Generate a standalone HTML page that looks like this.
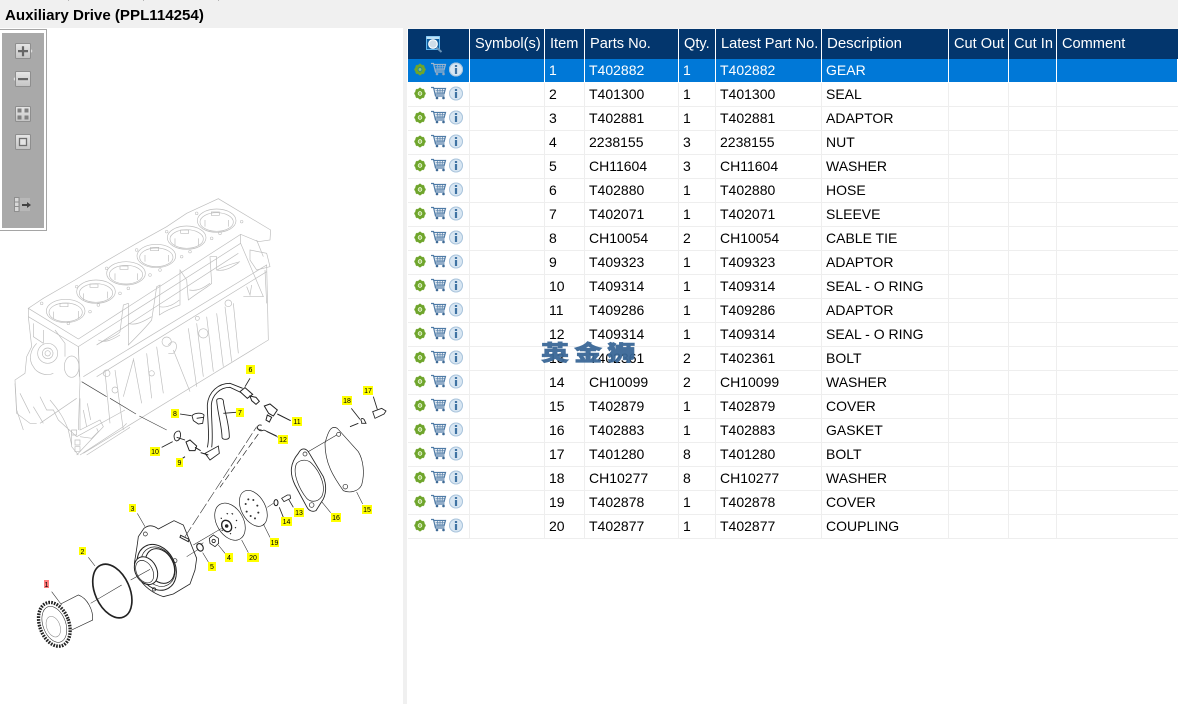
<!DOCTYPE html>
<html lang="en">
<head>
<meta charset="utf-8">
<title>Auxiliary Drive</title>
<style>
html,body{margin:0;padding:0;background:#fff;}
body{width:1178px;height:704px;overflow:hidden;position:relative;font-family:"Liberation Sans","Noto Sans CJK SC",sans-serif;}
.abs{position:absolute;}
#title{left:0;top:0;width:1178px;height:28px;background:#f0f0f0;}
#title span{position:absolute;left:5px;top:7px;font-size:15.1px;font-weight:bold;line-height:17px;color:#000;white-space:nowrap;}
#title i{position:absolute;top:0;width:1px;height:1px;background:#b5b5b5;}
#sep{left:403px;top:28px;width:4px;height:676px;background:#f0f0f0;}
#band{left:407px;top:28px;width:771px;height:1px;background:#f4f4f4;}
#tbi{left:2px;top:33px;width:42px;height:195px;background:#a9a9a9;}
#tbo{left:0;top:29px;width:47px;height:202px;box-sizing:border-box;border:1px solid #a5a5a5;border-left:none;background:#fff;}
table{position:absolute;left:408px;top:29px;width:770px;border-collapse:separate;border-spacing:0;table-layout:fixed;}
th{background:#03366d;color:#fff;font-weight:normal;font-size:14.6px;height:30px;padding:0 0 0 5px;text-align:left;border-right:1px solid #fff;box-sizing:border-box;white-space:nowrap;overflow:hidden;line-height:30px;}
td{height:24px;box-sizing:border-box;padding:1px 0 1px 4px;font-size:14px;line-height:21px;color:#000;border-right:1px solid #eee;border-bottom:1px solid #eee;white-space:nowrap;overflow:hidden;}
tr.s td{background:#0078d7;color:#fff;border-right:1px solid #fff;border-bottom:1px solid #fff;}
tr.s svg{--c:#9db4cc;--d:#8fa6bf;}
td:last-child,th:last-child{border-right:none;}
td.ic{padding:0;position:relative;}
td.ic svg{position:absolute;left:4px;top:2px;}
#wm{left:541px;top:335px;height:34px;font-family:"Noto Sans CJK SC",sans-serif;font-weight:900;font-size:25px;line-height:34px;letter-spacing:4.6px;color:#3a6897;white-space:nowrap;opacity:.95;transform:scale(1.12,.86);transform-origin:left center;-webkit-text-stroke:.7px #3a6897;}
.l{font:7px "Liberation Sans",sans-serif;fill:#000;text-anchor:middle;}
</style>
</head>
<body>
<div id="title" class="abs"><i style="left:68px"></i><i style="left:143px"></i><i style="left:218px"></i><span>Auxiliary Drive (PPL114254)</span></div>
<div id="sep" class="abs"></div>
<div id="band" class="abs"></div>

<svg class="abs" style="left:0;top:0" width="403" height="704" viewBox="0 0 403 704">
 <defs>
 <filter id="bl" x="-5%" y="-5%" width="110%" height="110%"><feGaussianBlur stdDeviation=".3"/></filter>
 </defs>
 <g filter="url(#bl)">
 <!-- engine block, coordinates in 3x zoom space -->
 <g transform="translate(0,190) scale(.33333)" fill="none" stroke="#bdbdbd" stroke-width="2">
  <path d="M85 355 L100 345 L130 325 L225 270 L315 215 L410 160 L500 110 L560 70 L625 40 L655 26 L812 120 L810 150 L775 155 L722 133 L235 447 L85 355Z"/>
  <path d="M85 355 L85 380 L235 470 L722 160 L722 133"/>
  <ellipse cx="197" cy="363" rx="58" ry="35"/><ellipse cx="197" cy="367" rx="50" ry="28"/>
  <ellipse cx="288" cy="305" rx="58" ry="35"/><ellipse cx="288" cy="309" rx="50" ry="28"/>
  <ellipse cx="378" cy="250" rx="58" ry="35"/><ellipse cx="378" cy="254" rx="50" ry="28"/>
  <ellipse cx="469" cy="198" rx="58" ry="35"/><ellipse cx="469" cy="202" rx="50" ry="28"/>
  <ellipse cx="560" cy="143" rx="58" ry="35"/><ellipse cx="560" cy="147" rx="50" ry="28"/>
  <ellipse cx="650" cy="92" rx="58" ry="35"/><ellipse cx="650" cy="96" rx="50" ry="28"/>
  <path d="M180 340h24v10h-24zM270 282h24v10h-24zM360 228h24v10h-24zM452 172h24v10h-24zM542 120h24v10h-24zM634 66h24v10h-24z"/>
  <path d="M160 385v-20M235 385v-22M250 330v-20M322 325v-20M345 270v-20M412 270v-20M435 215v-20M505 215v-20M525 165v-20M595 165v-20M615 110v-20M685 110v-20"/>
  <g stroke-width="1.6"><circle cx="125" cy="340" r="4"/><circle cx="205" cy="400" r="4"/><circle cx="270" cy="365" r="4"/><circle cx="295" cy="345" r="4"/><circle cx="360" cy="310" r="4"/><circle cx="385" cy="295" r="4"/><circle cx="450" cy="255" r="4"/><circle cx="480" cy="240" r="4"/><circle cx="545" cy="200" r="4"/><circle cx="570" cy="185" r="4"/><circle cx="635" cy="145" r="4"/><circle cx="660" cy="130" r="4"/><circle cx="725" cy="95" r="4"/><circle cx="590" cy="70" r="4"/><circle cx="500" cy="125" r="4"/><circle cx="410" cy="180" r="4"/><circle cx="320" cy="235" r="4"/><circle cx="230" cy="290" r="4"/></g>
  <!-- side skirt -->
  <path d="M235 470 L240 575 L235 720 M250 560 L800 225 L805 450 L250 790 M290 465 L715 190 M722 160 L790 320 L730 320 M290 560 L800 245"/>
  <path d="M290 465 C300 455 350 440 360 425 L370 345 L385 340 L385 465 C410 440 440 410 455 390 L470 290 L480 285 L478 375 C500 360 540 345 540 345 L540 240 L560 270 L565 330 C590 310 625 290 635 280 L630 200 L650 200 L650 240 C680 225 720 215 720 215"/>
  <path d="M295 450c20 10 40 0 65-15M385 400c20 8 45-5 70-20M478 350c25 5 45-8 60-20M568 300c25 5 45-8 62-20M650 240c25 5 45-8 66-22"/>
  <path d="M750 180 L800 190 L810 230 L770 240 L750 210Z M770 150 L790 200 M795 240 L800 340 M740 290 L750 315 L755 285"/>
  <path d="M370 620 L400 510 M400 505 L425 640 M440 490 L455 625 M470 470 L490 610 M505 465 C525 440 540 470 520 490 L505 490 M520 480 L570 605 M565 415 L590 590 M590 400 L610 560 M620 380 L640 545 M650 370 L670 530 M675 350 L695 515 M700 340 L715 490 M315 545 L330 700 M345 540 L370 720"/>
  <circle cx="500" cy="455" r="14"/><circle cx="610" cy="430" r="14"/><circle cx="320" cy="550" r="10"/><circle cx="345" cy="600" r="9"/><circle cx="455" cy="550" r="8"/><circle cx="592" cy="385" r="6"/><circle cx="685" cy="340" r="10"/>
  <!-- front face -->
  <path d="M85 380 L95 470 L80 500 L75 550 L45 570 L50 660 L70 720 M235 470 L238 560"/>
  <circle cx="143" cy="490" r="30"/><circle cx="143" cy="490" r="16"/><circle cx="143" cy="490" r="8"/>
  <ellipse cx="215" cy="530" rx="22" ry="32"/>
  <path d="M100 400l0 40 30 20M130 420l0 40M165 420l30 40 0 40M110 460c-20 20-25 50-10 70 10 20 40 30 60 20"/>
 </g>
 <g transform="translate(0,430) scale(.33333)" fill="none" stroke="#bdbdbd" stroke-width="2">
  <path d="M45 -140 L50 -50 L90 -20 L110 -20 M120 -20 L230 -95 M215 0 L215 50 L235 75 M240 -95 L240 0 L300 -30 L310 -10 L230 75 M230 20 L375 -60"/>
  <path d="M120 -100 L140 -60 L160 -60 L175 -30 L230 20 M100 -70 L130 -20 M60 -110 L90 -50 M150 -90 C175 -60 190 -40 205 0 L215 45 M250 -60 L260 -10 M262 -80 L272 -30 M240 20 L275 25 L295 5 L290 -5 M215 0h15v15h-15zM225 30h15v15h-15zM225 50h15v15h-15z"/>
  <path d="M240 75 L370 -10 L380 -20 M260 75 L390 -8"/>
 </g>
 <!-- leader dash -->
 <g transform="translate(0,190) scale(.33333)" fill="none" stroke="#444" stroke-width="2">
  <path d="M245 575 L320 620 M330 625 L408 672 M418 678 L500 720"/>
 </g>
 <!-- parts upper -->
 <g transform="translate(130,360) scale(.33333)" fill="none" stroke="#222" stroke-width="2.6">
  <path d="M232 262 C240 230 232 180 232 135 C235 95 265 70 300 70 L338 85 M245 262 C250 230 244 180 244 135 C246 105 270 82 300 82 L332 97"/>
  <path d="M330 95 L345 83 L368 103 L352 115 Z M360 108 L378 112 L388 124 L378 133 L365 122Z" stroke-width="3"/>
  <path d="M345 80 L360 55 M225 280 L265 258 L268 280 L240 300 Z" />
  <path d="M260 120 C262 115 278 113 280 122 C282 150 298 190 298 232 C295 240 278 240 276 232 C276 200 262 155 260 120Z"/>
  <path d="M280 160 L318 157"/>
  <path d="M186 167 C195 158 215 157 222 165 L218 190 L205 192 L190 182 Z M200 175 L220 172 M150 162 L184 167"/>
  <path d="M403 138 L420 132 L442 150 L430 168 L416 160 Z M412 165 L425 172 L418 186 L408 180Z M442 162 L482 182" stroke-width="3"/>
  <path d="M395 196 C385 192 380 200 384 208 C390 214 398 212 402 210 M402 210 L440 228"/>
  <path d="M135 240 C128 225 135 213 148 213 C155 222 152 240 140 243 Z M140 232 L165 240 M95 262 L128 245" />
  <path d="M168 246 L180 240 L200 258 L195 272 L178 272 Z M195 262 L212 272 M212 278 L235 285 M165 290 L150 300" stroke-width="3"/>
  <path d="M385 222 L270 382" stroke-dasharray="20 10" stroke-width="2"/>
  <path d="M695 185 C690 178 695 172 702 178 L708 190 L695 190Z M728 155 L755 145 L768 153 L762 162 L735 175 Z M664 145 L690 178 M730 110 L742 148 M660 200 L685 190" />
 </g>
 <!-- parts lower -->
 <g transform="translate(0,430) scale(.33333)" fill="none" stroke="#222" stroke-width="2.6">
  <!-- cover 15 -->
  <path d="M975 40 C985 0 995 -15 1012 -5 L1075 65 C1090 90 1095 130 1085 165 C1075 185 1050 190 1030 182 C1000 140 975 100 975 40Z" stroke-width="2"/>
  <circle cx="1016" cy="13" r="6" stroke-width="2"/><circle cx="1036" cy="170" r="7" stroke-width="2"/>
  <path d="M1070 186 L1088 222 M925 65 L1010 15" stroke-width="1.6"/>
  <!-- gasket 16 -->
  <path d="M895 70 C905 50 920 55 928 70 L970 140 C980 165 980 195 965 215 L948 242 C935 248 925 240 920 230 L885 165 C868 130 870 100 895 70Z"/>
  <path d="M890 100 C905 85 925 90 935 100 C960 125 980 170 965 200 C950 220 930 215 920 205 C900 180 875 130 890 100Z" stroke-width="2"/>
  <circle cx="915" cy="72" r="6" stroke-width="2"/><circle cx="935" cy="225" r="7" stroke-width="2"/>
  <path d="M965 215 L992 248" stroke-width="1.6"/>
  <!-- 19 disk -->
  <ellipse cx="760" cy="235" rx="36" ry="58" transform="rotate(-28 760 235)" stroke-width="2"/>
  <g fill="#333" stroke="none"><circle cx="737" cy="222" r="3"/><circle cx="745" cy="208" r="3"/><circle cx="760" cy="210" r="3"/><circle cx="772" cy="227" r="3"/><circle cx="775" cy="248" r="3"/><circle cx="740" cy="245" r="3"/><circle cx="752" cy="258" r="3"/><circle cx="765" cy="265" r="3"/></g>
  <path d="M790 282 L810 322 M802 232 L820 220" stroke-width="1.6"/>
  <!-- 14 13 -->
  <ellipse cx="828" cy="218" rx="6" ry="9" stroke-width="3"/><path d="M838 232 L850 262 M845 205 L862 195 L870 195 L872 205 L852 215Z M866 208 L880 232" stroke-width="2.4"/>
  <!-- 20 -->
  <ellipse cx="690" cy="275" rx="40" ry="60" transform="rotate(-30 690 275)" stroke-width="2"/>
  <ellipse cx="680" cy="288" rx="14" ry="18" stroke-width="4" transform="rotate(-30 680 288)"/><circle cx="680" cy="288" r="4" fill="#222"/>
  <path d="M662 265l4 0M680 250l4 2M695 250l4 3M708 270l3 3M705 292l3 2M690 310l3 2M665 300l3 2" stroke-width="3.4"/>
  <path d="M725 330 L745 368 M665 295 L580 345 M610 338l-6 4" stroke-width="1.6"/>
  <!-- 4, 5 -->
  <path d="M628 325 L640 315 L655 325 L656 340 L645 350 L630 340Z" stroke-width="2.4"/><circle cx="641" cy="333" r="5"/>
  <ellipse cx="600" cy="352" rx="9" ry="12" stroke-width="3.4" transform="rotate(-30 600 352)"/>
  <path d="M655 345 L675 370 M608 368 L625 396" stroke-width="1.6"/>
  <!-- housing 3 -->
  <path d="M432 295 C445 285 460 285 475 297 L522 272 L550 285 L590 385 L585 420 L570 462 L520 492 L490 500 C460 490 430 470 415 440 L403 400 C408 370 412 345 415 320Z" stroke-width="2.4"/>
  <ellipse cx="470" cy="412" rx="55" ry="72" transform="rotate(-28 470 412)" stroke-width="3"/>
  <ellipse cx="474" cy="410" rx="48" ry="62" transform="rotate(-28 474 410)" stroke-width="2"/>
  <ellipse cx="480" cy="408" rx="40" ry="55" transform="rotate(-28 480 408)" stroke-width="3"/>
  <ellipse cx="438" cy="422" rx="32" ry="44" transform="rotate(-28 438 422)" stroke-width="3" fill="#fff"/>
  <ellipse cx="434" cy="425" rx="24" ry="36" transform="rotate(-28 434 425)" stroke-width="2"/>
  <circle cx="436" cy="312" r="6" stroke-width="2"/><circle cx="525" cy="392" r="6" stroke-width="2"/><circle cx="462" cy="478" r="5" stroke-width="2"/>
  <path d="M540 322 L565 335 L567 328 L542 316Z" stroke-width="3"/>
  <path d="M435 290 L412 250 M560 380 L595 358" stroke-width="1.6"/>
  <path d="M555 320 L770 -10" stroke-dasharray="34 8" stroke-width="1.8" stroke="#333"/>
  <!-- O-ring 2 -->
  <ellipse cx="337" cy="483" rx="52" ry="85" transform="rotate(-24 337 483)" stroke-width="5"/>
  <path d="M285 408 L265 382" stroke-width="1.6"/>
  <path d="M272 520 L365 465 M392 450 L450 418" stroke-width="1.6"/>
  <!-- gear 1 -->
  <path d="M182 522 L235 495 C262 505 280 540 278 570 L215 600" stroke-width="2"/>
  <ellipse cx="163" cy="583" rx="44" ry="68" transform="rotate(-20 163 583)" stroke-width="10" stroke-dasharray="5 3.500"/>
  <ellipse cx="163" cy="583" rx="34" ry="56" transform="rotate(-20 163 583)" stroke-width="1.6"/>
  <ellipse cx="160" cy="590" rx="20" ry="32" transform="rotate(-20 160 590)" stroke-width="1.6" stroke="#888"/>
  <path d="M155 485 L185 525" stroke-width="1.6"/>
  <!-- 10 9 leaders -->
  <path d="M770 -5 L785 0 M800 5 L835 22" stroke-width="1.6"/>
 </g>
 </g>
 <!-- labels -->
 <g>
  <rect x="246" y="365" width="9" height="9" fill="#ffff00"/><text class="l" x="250.5" y="372">6</text>
  <rect x="171" y="409" width="8" height="9" fill="#ffff00"/><text class="l" x="175" y="416">8</text>
  <rect x="236" y="408" width="8" height="9" fill="#ffff00"/><text class="l" x="240" y="415">7</text>
  <rect x="292" y="417" width="10" height="9" fill="#ffff00"/><text class="l" x="297" y="424">11</text>
  <rect x="342" y="396" width="10" height="9" fill="#ffff00"/><text class="l" x="347" y="403">18</text>
  <rect x="363" y="386" width="10" height="9" fill="#ffff00"/><text class="l" x="368" y="393">17</text>
  <rect x="278" y="435" width="10" height="9" fill="#ffff00"/><text class="l" x="283" y="442">12</text>
  <rect x="150" y="447" width="10" height="9" fill="#ffff00"/><text class="l" x="155" y="454">10</text>
  <rect x="176" y="458" width="7" height="9" fill="#ffff00"/><text class="l" x="179.5" y="465">9</text>
  <rect x="129" y="504" width="7" height="8" fill="#ffff00"/><text class="l" x="132.5" y="511">3</text>
  <rect x="79" y="547" width="7" height="8" fill="#ffff00"/><text class="l" x="82.5" y="554">2</text>
  <rect x="44" y="580" width="5" height="8" fill="#ff7b7b"/><text class="l" x="46.5" y="587">1</text>
  <rect x="362" y="505" width="10" height="9" fill="#ffff00"/><text class="l" x="367" y="512">15</text>
  <rect x="331" y="513" width="10" height="9" fill="#ffff00"/><text class="l" x="336" y="520">16</text>
  <rect x="294" y="508" width="10" height="9" fill="#ffff00"/><text class="l" x="299" y="515">13</text>
  <rect x="281" y="517" width="11" height="9" fill="#ffff00"/><text class="l" x="286.5" y="524">14</text>
  <rect x="270" y="538" width="9" height="9" fill="#ffff00"/><text class="l" x="274.5" y="545">19</text>
  <rect x="247" y="553" width="12" height="9" fill="#ffff00"/><text class="l" x="253" y="560">20</text>
  <rect x="225" y="553" width="8" height="9" fill="#ffff00"/><text class="l" x="229" y="560">4</text>
  <rect x="208" y="562" width="8" height="9" fill="#ffff00"/><text class="l" x="212" y="569">5</text>
 </g>
</svg>

<div id="tbo" class="abs"></div>
<div id="tbi" class="abs"></div>
<svg class="abs" style="left:0;top:29px" width="47" height="202" viewBox="0 29 47 202">
 <defs>
  <linearGradient id="bt" x1="0" y1="0" x2="0" y2="1"><stop offset="0" stop-color="#e6e6e6"/><stop offset="1" stop-color="#c4c4c4"/></linearGradient>
 </defs>
 <g stroke="#8e8e8e" stroke-width="1" fill="url(#bt)">
  <rect x="15.500" y="43.500" width="15" height="15" rx="1"/>
  <rect x="15.500" y="71.500" width="15" height="15" rx="1"/>
  <rect x="15.500" y="106.500" width="15" height="15" rx="1"/>
  <rect x="15.500" y="134.500" width="15" height="15" rx="1"/>
 </g>
 <path d="M31 49l1.500 2-1.500 2z" fill="#e0e0e0"/><path d="M15 77l-1.500 2 1.500 2z" fill="#e0e0e0"/>
 <path d="M18 50h10v2.200H18zM21.900 46.200h2.200v10h-2.200z" fill="#666"/>
 <path d="M18 78h10v2.200H18z" fill="#666"/>
 <path d="M17.500 108.500h4v4h-4zM24.500 108.500h4v4h-4zM17.500 115.500h4v4h-4zM24.500 115.500h4v4h-4z" fill="#808080"/>
 <rect x="19.500" y="138.500" width="7" height="7" fill="#e4e4e4" stroke="#6f6f6f" stroke-width="1.300"/>
 <path d="M14.500 197.500h4.500v14h-4.500z" fill="#d8d8d8" stroke="#8e8e8e"/>
 <path d="M14.500 202h4.500M14.500 206.500h4.500" stroke="#8e8e8e"/>
 <path d="M20 198h10v13H20z" fill="#c8c8c8" opacity=".5"/>
 <path d="M22 204h5v-2l4 3-4 3v-2h-5z" fill="#444"/>
</svg>

<svg width="0" height="0" style="position:absolute">
 <defs>
  <symbol id="ic" viewBox="0 0 60 16" overflow="visible">
   <g>
    <circle cx="8" cy="8.500" r="3.700" fill="none" stroke="#6fa52c" stroke-width="3"/>
    <path d="M8 2.800v2M8 12.200v2M2.300 8.500h2M11.700 8.500h2M4 4.500l1.400 1.400M10.600 11.100l1.400 1.400M12 4.500l-1.400 1.400M5.400 11.100L4 12.500" stroke="#6fa52c" stroke-width="2"/>
    <circle cx="8" cy="8.500" r="1.500" fill="#9ccb5a"/>
   </g>
   <g transform="translate(2,0)">
   <g fill="none" style="stroke:var(--c,#4f7ba6)" stroke-width="1.200">
    <path d="M17 2.500h2.500l2 8.500h9"/>
    <path d="M20 3.500h11.500l-1.500 5.500h-9"/>
    <path d="M21.500 5.300h9M21.500 7.100h8.500M23.500 3.500l.5 5.500M26 3.500v5.500M28.500 3.500L28 9" stroke-width=".7"/>
   </g>
   <circle cx="23" cy="13" r="1.300" style="fill:var(--d,#3e6a96)"/><circle cx="29.500" cy="13" r="1.300" style="fill:var(--d,#3e6a96)"/>
   </g>
   <circle cx="44" cy="8.500" r="7" fill="#d8e6f2"/>
   <circle cx="44" cy="8.500" r="6.500" fill="none" stroke="#a9c4dc" stroke-width="1"/>
   <path d="M42.900 4h2.200v2h-2.200zM42.900 7h2.200v6h-2.200z" fill="#3f73a3"/>
  </symbol>
 </defs>
</svg>

<table>
<colgroup>
<col style="width:62px"><col style="width:75px"><col style="width:40px"><col style="width:94px"><col style="width:37px"><col style="width:106px"><col style="width:127px"><col style="width:60px"><col style="width:48px"><col style="width:121px">
</colgroup>
<thead><tr>
<th style="padding:0;position:relative"><svg style="position:absolute;left:18px;top:7px" width="18" height="17" viewBox="0 0 18 17"><path d="M.5.500h13v13H.5z" fill="#0d5d9e" stroke="#5fb6ee"/><path d="M.5 .5h13v2.500H.5z" fill="#bfe3f7"/><circle cx="7" cy="8" r="4.300" fill="#cfdde8" stroke="#fff" stroke-width="1.200"/><path d="M10.500 11.500l5 4.500" stroke="#6b94b8" stroke-width="2"/></svg></th>
<th>Symbol(s)</th><th>Item</th><th>Parts No.</th><th>Qty.</th><th>Latest Part No.</th><th style="font-size:15px">Description</th><th>Cut Out</th><th>Cut In</th><th>Comment</th>
</tr></thead>
<tbody>
<tr class="s"><td class="ic"><svg width="60" height="16"><use href="#ic"/></svg></td><td></td><td>1</td><td>T402882</td><td>1</td><td>T402882</td><td>GEAR</td><td></td><td></td><td></td></tr>
<tr><td class="ic"><svg width="60" height="16"><use href="#ic"/></svg></td><td></td><td>2</td><td>T401300</td><td>1</td><td>T401300</td><td>SEAL</td><td></td><td></td><td></td></tr>
<tr><td class="ic"><svg width="60" height="16"><use href="#ic"/></svg></td><td></td><td>3</td><td>T402881</td><td>1</td><td>T402881</td><td>ADAPTOR</td><td></td><td></td><td></td></tr>
<tr><td class="ic"><svg width="60" height="16"><use href="#ic"/></svg></td><td></td><td>4</td><td>2238155</td><td>3</td><td>2238155</td><td>NUT</td><td></td><td></td><td></td></tr>
<tr><td class="ic"><svg width="60" height="16"><use href="#ic"/></svg></td><td></td><td>5</td><td>CH11604</td><td>3</td><td>CH11604</td><td>WASHER</td><td></td><td></td><td></td></tr>
<tr><td class="ic"><svg width="60" height="16"><use href="#ic"/></svg></td><td></td><td>6</td><td>T402880</td><td>1</td><td>T402880</td><td>HOSE</td><td></td><td></td><td></td></tr>
<tr><td class="ic"><svg width="60" height="16"><use href="#ic"/></svg></td><td></td><td>7</td><td>T402071</td><td>1</td><td>T402071</td><td>SLEEVE</td><td></td><td></td><td></td></tr>
<tr><td class="ic"><svg width="60" height="16"><use href="#ic"/></svg></td><td></td><td>8</td><td>CH10054</td><td>2</td><td>CH10054</td><td>CABLE TIE</td><td></td><td></td><td></td></tr>
<tr><td class="ic"><svg width="60" height="16"><use href="#ic"/></svg></td><td></td><td>9</td><td>T409323</td><td>1</td><td>T409323</td><td>ADAPTOR</td><td></td><td></td><td></td></tr>
<tr><td class="ic"><svg width="60" height="16"><use href="#ic"/></svg></td><td></td><td>10</td><td>T409314</td><td>1</td><td>T409314</td><td>SEAL - O RING</td><td></td><td></td><td></td></tr>
<tr><td class="ic"><svg width="60" height="16"><use href="#ic"/></svg></td><td></td><td>11</td><td>T409286</td><td>1</td><td>T409286</td><td>ADAPTOR</td><td></td><td></td><td></td></tr>
<tr><td class="ic"><svg width="60" height="16"><use href="#ic"/></svg></td><td></td><td>12</td><td>T409314</td><td>1</td><td>T409314</td><td>SEAL - O RING</td><td></td><td></td><td></td></tr>
<tr><td class="ic"><svg width="60" height="16"><use href="#ic"/></svg></td><td></td><td>13</td><td>T402361</td><td>2</td><td>T402361</td><td>BOLT</td><td></td><td></td><td></td></tr>
<tr><td class="ic"><svg width="60" height="16"><use href="#ic"/></svg></td><td></td><td>14</td><td>CH10099</td><td>2</td><td>CH10099</td><td>WASHER</td><td></td><td></td><td></td></tr>
<tr><td class="ic"><svg width="60" height="16"><use href="#ic"/></svg></td><td></td><td>15</td><td>T402879</td><td>1</td><td>T402879</td><td>COVER</td><td></td><td></td><td></td></tr>
<tr><td class="ic"><svg width="60" height="16"><use href="#ic"/></svg></td><td></td><td>16</td><td>T402883</td><td>1</td><td>T402883</td><td>GASKET</td><td></td><td></td><td></td></tr>
<tr><td class="ic"><svg width="60" height="16"><use href="#ic"/></svg></td><td></td><td>17</td><td>T401280</td><td>8</td><td>T401280</td><td>BOLT</td><td></td><td></td><td></td></tr>
<tr><td class="ic"><svg width="60" height="16"><use href="#ic"/></svg></td><td></td><td>18</td><td>CH10277</td><td>8</td><td>CH10277</td><td>WASHER</td><td></td><td></td><td></td></tr>
<tr><td class="ic"><svg width="60" height="16"><use href="#ic"/></svg></td><td></td><td>19</td><td>T402878</td><td>1</td><td>T402878</td><td>COVER</td><td></td><td></td><td></td></tr>
<tr><td class="ic"><svg width="60" height="16"><use href="#ic"/></svg></td><td></td><td>20</td><td>T402877</td><td>1</td><td>T402877</td><td>COUPLING</td><td></td><td></td><td></td></tr>
</tbody>
</table>

<div id="wm" class="abs">英金狮</div>
</body>
</html>
